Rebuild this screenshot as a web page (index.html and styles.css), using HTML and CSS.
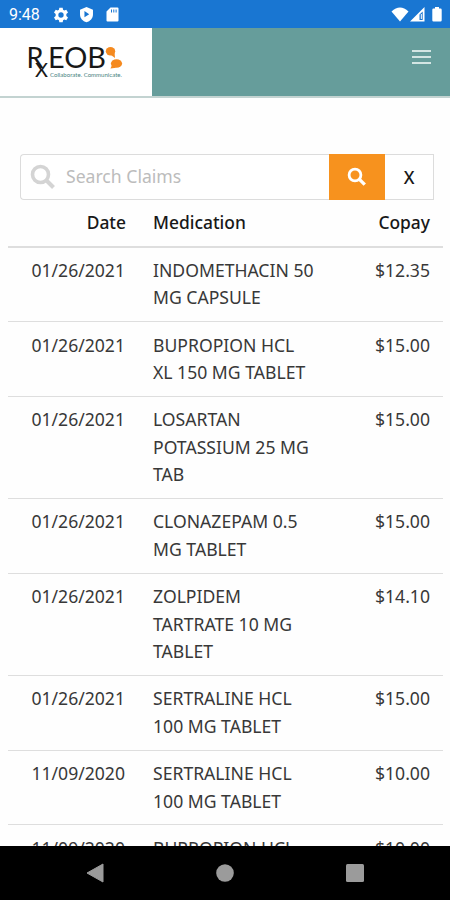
FILE: index.html
```html
<!DOCTYPE html>
<html lang="en">
<head>
  <meta charset="utf-8">
  <title>RxEOB Claims</title>
  <link rel="stylesheet" href="styles.css">
</head>
<body>
  <div class="status-bar">
    <span class="clock">9:48</span>
    <svg class="gear" width="16" height="16" viewBox="0 0 24 24"><path fill="#fff" fill-rule="evenodd" d="M9.500 1h5l.6 3.200 1.800 1 3-1.100 2.600 4.300-2.500 2.100v3l2.500 2.100-2.600 4.300-3-1.100-1.800 1-.6 3.200h-5l-.6-3.200-1.800-1-3 1.100-2.600-4.300L4 13.500v-3L1.500 8.400l2.600-4.300 3 1.100 1.800-1zM12 8a4 4 0 1 0 0 8 4 4 0 0 0 0-8z"/></svg>
    <svg class="shield" width="15" height="17" viewBox="0 0 22 24"><path fill="#fff" fill-rule="evenodd" d="M11 1l9.500 4v7c0 5.500-4 9.800-9.500 11.500C5.500 21.800 1.500 17.500 1.500 12V5zM8 7v9l7-4.500z"/></svg>
    <svg class="card" width="13" height="15" viewBox="0 0 13 15"><path fill="#fff" fill-rule="evenodd" d="M4.500 .5H11.500q1 0 1 1v12q0 1-1 1h-10q-1 0-1-1v-9zM5 2.500v3h1v-3zM7.300 2.500v3h1v-3zM9.600 2.500v3h1v-3z"/></svg>
    <div class="signals">
      <svg width="18" height="15" viewBox="0 0 18 15"><path fill="#fff" d="M.5 4.500Q9-3.500 17.500 4.500L9 14.500z"/></svg>
      <svg width="15" height="15" viewBox="0 0 15 15"><path fill="#fff" fill-rule="evenodd" d="M0 14.500L14.500 0v14.500zM9.500 7.500v5.500h3.200V4.500z"/><path fill="#fff" d="M10.800 7h1v5h-1z"/></svg>
      <svg class="battery" width="10" height="15" viewBox="0 0 10 15"><path fill="#fff" d="M3 0h4v1.500h1.500q1.200 0 1.200 1.200v10.600q0 1.200-1.200 1.200h-7q-1.200 0-1.200-1.200V2.700q0-1.200 1.200-1.200H3z"/></svg>
    </div>
  </div>

  <header class="navbar">
    <div class="brand">
      <svg width="100" height="50" viewBox="0 0 100 50">
        <text class="logo-r" x="-1.500" y="27" textLength="17" lengthAdjust="spacingAndGlyphs">R</text>
        <text class="logo-x" x="7" y="36" textLength="13" lengthAdjust="spacingAndGlyphs">X</text>
        <text class="logo-eob" x="20" y="27" textLength="58" lengthAdjust="spacingAndGlyphs">EOB</text>
        <text class="tagline" x="22" y="36" textLength="72" lengthAdjust="spacingAndGlyphs">Collaborate. Communicate.</text>
        <g fill="#f58a1f">
          <ellipse cx="82.500" cy="10.300" rx="4.700" ry="4.200"/>
          <path d="M83 14l4 3-.5-6z"/>
          <ellipse cx="88.500" cy="22.500" rx="5.600" ry="4.300"/>
          <path d="M84 24l-1.500 3.500 5.500-.7z"/>
        </g>
      </svg>
    </div>
    <div class="menu"><i></i><i></i><i></i></div>
  </header>

  <main class="claims">
    <div class="search">
      <div class="search-field">
        <svg width="26" height="26" viewBox="0 0 26 26"><circle cx="10.500" cy="10.500" r="8" fill="none" stroke="#d4d4d4" stroke-width="3.600"/><path d="M16.500 16.500l7 7" stroke="#d4d4d4" stroke-width="4"/></svg>
        <span>Search Claims</span>
      </div>
      <div class="search-button">
        <svg width="20" height="20" viewBox="0 0 20 20"><circle cx="8" cy="8" r="5.900" fill="none" stroke="#fff" stroke-width="2.800"/><path d="M12.400 12.400l5.400 5.200" stroke="#fff" stroke-width="3.400"/></svg>
      </div>
      <div class="search-clear">X</div>
    </div>

    <table>
      <thead>
        <tr><th class="date">Date</th><th class="med">Medication</th><th class="copay">Copay</th></tr>
      </thead>
      <tbody>
        <tr><td class="date">01/26/2021</td><td class="med">INDOMETHACIN 50<br>MG CAPSULE</td><td class="copay">$12.35</td></tr>
        <tr><td class="date">01/26/2021</td><td class="med">BUPROPION HCL<br>XL 150 MG TABLET</td><td class="copay">$15.00</td></tr>
        <tr><td class="date">01/26/2021</td><td class="med">LOSARTAN<br>POTASSIUM 25 MG<br>TAB</td><td class="copay">$15.00</td></tr>
        <tr><td class="date">01/26/2021</td><td class="med">CLONAZEPAM 0.5<br>MG TABLET</td><td class="copay">$15.00</td></tr>
        <tr><td class="date">01/26/2021</td><td class="med">ZOLPIDEM<br>TARTRATE 10 MG<br>TABLET</td><td class="copay">$14.10</td></tr>
        <tr><td class="date">01/26/2021</td><td class="med">SERTRALINE HCL<br>100 MG TABLET</td><td class="copay">$15.00</td></tr>
        <tr><td class="date">11/09/2020</td><td class="med">SERTRALINE HCL<br>100 MG TABLET</td><td class="copay">$10.00</td></tr>
        <tr><td class="date">11/09/2020</td><td class="med">BUPROPION HCL</td><td class="copay">$10.00</td></tr>
      </tbody>
    </table>
  </main>

  <footer class="nav-buttons">
    <svg width="18" height="20" viewBox="0 0 18 20"><path fill="#9b9b9b" d="M17 1v18L1 10z" stroke="#9b9b9b" stroke-linejoin="round"/></svg>
    <svg width="18" height="18" viewBox="0 0 18 18"><circle cx="9" cy="9" r="8.800" fill="#9b9b9b"/></svg>
    <svg width="18" height="18" viewBox="0 0 18 18"><rect width="18" height="18" rx="1.500" fill="#9b9b9b"/></svg>
  </footer>
</body>
</html>
```
FILE: styles.css
```css
* {
  box-sizing: border-box;
}

body {
  margin: 0;
  height: 900px;
  display: flex;
  flex-direction: column;
  overflow: hidden;
  background-color: #fefefe;
  color: #383838;
  font-family: "Noto Sans", sans-serif;
  font-size: 17.6px;
  line-height: 27.5px;
}

svg {
  display: block;
  flex-shrink: 0;
  overflow: visible;
}

.status-bar {
  flex: 0 0 28px;
  display: flex;
  align-items: center;
  padding: 1px 8px 0 9px;
  background-color: #1976d2;
  color: #fff;
  line-height: 20px;
}

.clock {
  width: 44px;
  font-family: Roboto, sans-serif;
  font-size: 16px;
}

.shield {
  margin-left: 10px;
}

.card {
  margin-left: 12px;
}

.signals {
  display: flex;
  gap: 1px;
  margin-left: auto;
}

.battery {
  margin-left: 6px;
}

.navbar {
  flex: 0 0 70px;
  display: flex;
  justify-content: space-between;
  background-color: #669d9b;
  border-bottom: 2px solid #c3d3d1;
}

.brand {
  width: 152px;
  padding: 13px 0 0 28px;
  background-color: #fff;
}

.logo-r,
.logo-x,
.logo-eob {
  font-family: Lato, sans-serif;
  font-size: 28px;
  fill: #181818;
}

.logo-x {
  font-size: 19px;
}

.tagline {
  font-family: Lato, sans-serif;
  font-size: 6.5px;
  fill: #4b8582;
}

.menu {
  display: flex;
  flex-direction: column;
  gap: 4px;
  padding: 22px 19px 0 0;
}

.menu i {
  width: 19px;
  height: 2px;
  background-color: #d3e5e3;
}

.claims {
  flex: 1;
  min-height: 0;
  overflow: hidden;
  padding: 56px 7px 0 8px;
}

.search {
  display: flex;
  height: 46px;
  margin: 0 9px 0 12px;
}

.search-field {
  flex: 1;
  display: flex;
  align-items: center;
  gap: 10px;
  padding-left: 9px;
  border: 1.5px solid #dcdcdc;
  border-right: 0;
  border-radius: 4px 0 0 4px;
  background-color: #fff;
  color: #bcbcbc;
}

.search-button {
  width: 56px;
  display: flex;
  align-items: center;
  justify-content: center;
  background-color: #f7921e;
}

.search-clear {
  width: 49px;
  border: 1px solid #dcdcdc;
  border-left: 0;
  background-color: #fff;
  color: #181818;
  font-weight: 500;
  line-height: 44px;
  text-align: center;
}

table {
  width: 100%;
  table-layout: fixed;
  border-collapse: separate;
  border-spacing: 0;
}

th {
  height: 47.5px;
  padding: 0 0 1px;
  border-bottom: 2px solid #dedede;
  color: #181818;
  font-weight: 500;
  font-size: 17.4px;
}

td {
  padding: 9.4px 0 9.3px;
  border-bottom: 1px solid #dedede;
  vertical-align: top;
}

.date {
  width: 145px;
  padding-right: 27px;
  text-align: right;
}

td.date {
  padding-right: 28px;
}

.med {
  text-align: left;
}

.copay {
  width: 100px;
  padding-right: 13px;
  text-align: right;
}

.nav-buttons {
  flex: 0 0 54px;
  display: flex;
  align-items: center;
  justify-content: space-between;
  padding: 0 86px;
  background-color: #000;
}
```
